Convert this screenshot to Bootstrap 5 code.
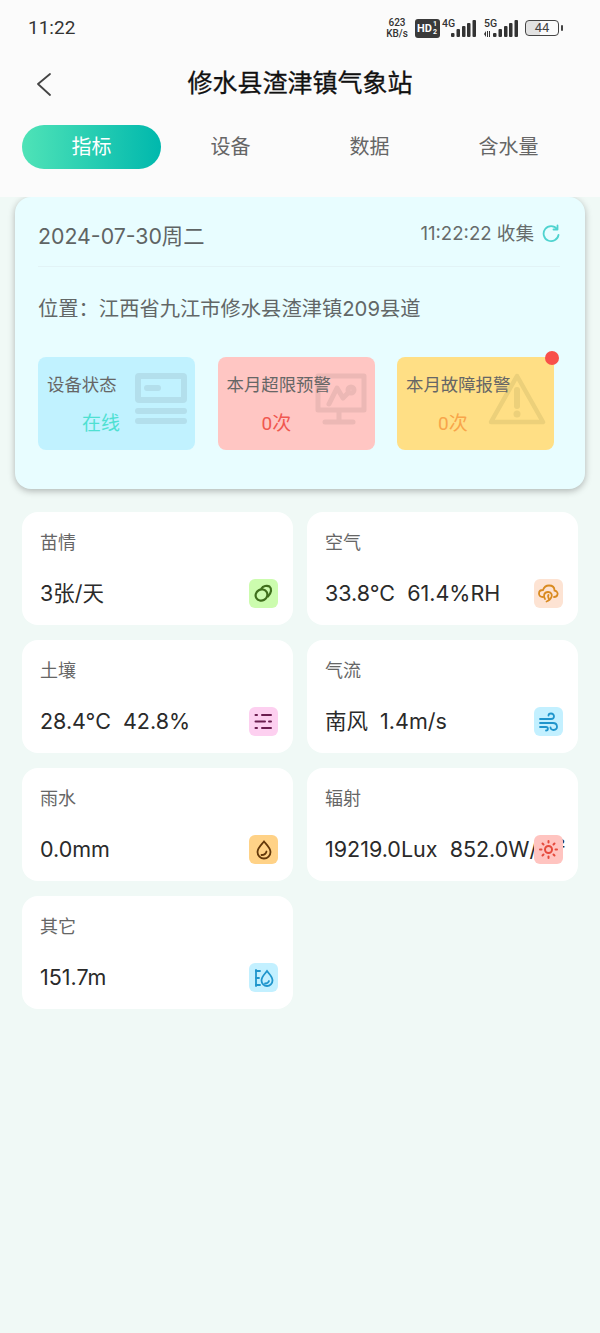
<!DOCTYPE html>
<html lang="zh-CN">
<head>
    <meta charset="UTF-8">
    <meta name="viewport" content="width=device-width, initial-scale=1.0">
    <title>修水县渣津镇气象站</title>
    <link href="https://cdn.jsdelivr.net/npm/bootstrap@5.3.0/dist/css/bootstrap.min.css" rel="stylesheet">
    <style>
        body {
            background: #f0f9f6;
            font-family: Roboto, "Noto Sans CJK SC", sans-serif;
            color: #222;
            min-height: 1333px;
        }
        /* top area */
        .top-head { background: #fbfbfb; height: 197px; position: relative; z-index: 2; }
        .status-row { height: 56px; padding: 0 37px 0 28px; }
        .clock { font-size: 19px; color: #333; }
        .speed { width: 26px; font-size: 10px; line-height: 11px; font-weight: 500; color: #333; text-align: center; white-space: nowrap; }
        .hd-tag {
            width: 25px; height: 19px; margin-left: 5px; background: #3a3a3a; color: #fff; border-radius: 3px;
            font-size: 11px; font-weight: 700; line-height: 11px; padding-left: 2px;
        }
        .hd-frac { font-size: 7px; line-height: 8px; text-align: center; margin-left: 1px; }
        .net-tag { width: 14px; height: 18px; font-size: 10.5px; font-weight: 500; color: #333; line-height: 10px; }
        .net-tag svg { display: block; margin-top: 2px; }
        .net-4g { margin-left: 2px; margin-right: -5px; }
        .net-5g { margin-left: 8px; margin-right: -5px; }
        .batt {
            width: 34px; height: 16px; margin-left: 7px; border: 1.5px solid #444; border-radius: 4px;
            font-size: 13px; line-height: 13px; text-align: center; color: #444;
            background: linear-gradient(90deg, #e2e2e2 44%, transparent 44%);
        }
        .batt-nub { width: 2px; height: 6px; background: #444; border-radius: 1px; margin-left: 2px; }
        .title-row { height: 56px; }
        .back-btn { position: absolute; left: 35px; top: 15px; }
        .page-title { font-size: 25px; font-weight: 400; color: #111; margin: 0; line-height: 56px; -webkit-text-stroke: .3px #111; }
        .tab-row { padding: 13px 22px 0; }
        .tab-item { width: 139px; height: 44px; line-height: 44px; font-size: 20px; color: #666; text-align: center; }
        .tab-item.is-on { color: #fff; border-radius: 22px; background: linear-gradient(90deg, #4fe3b7, #00b8ad); }
        /* summary card */
        .hero-card {
            margin: 0 15px; height: 292px; padding: 0 25px 0 23px; background: #e8fdff;
            border-radius: 16px;
            box-shadow: 0 2px 7px rgba(0, 0, 0, .28);
        }
        .hero-top { height: 70px; padding-top: 10px; border-bottom: 1px solid #e2f3f6; }
        .hero-date { font-size: 21.3px; color: #5f6464; font-family: Inter, "Noto Sans CJK SC", sans-serif; }
        .hero-time { font-size: 18.6px; color: #666b6b; font-family: Inter, "Noto Sans CJK SC", sans-serif; }
        .hero-clock { margin-top: -5px; }
        .hero-place { font-size: 20.3px; line-height: 28px; color: #626767; margin-top: 28px; font-family: Inter, "Noto Sans CJK SC", sans-serif; }
        .stat-row { margin-top: 34px; gap: 22.5px; }
        .stat-box { width: 157px; height: 93px; border-radius: 8px; padding: 16px 9px; position: relative; flex: none; }
        .stat-name { font-size: 17.4px; line-height: 24px; color: #666; white-space: nowrap; position: relative; }
        .stat-val { font-size: 19px; line-height: 26px; margin-top: 14px; margin-left: 35px; position: relative; }
        .stat-art { position: absolute; top: 16px; right: 8px; width: 52px; height: 52px; }
        .stat-art.is-wide { width: 58px; }
        .stat-blue { background: #c1f2ff; }
        .stat-blue .stat-val { color: #4fe0d2; }
        .stat-red { background: #ffc6c3; }
        .stat-red .stat-val { color: #f0574f; }
        .stat-yellow { background: #ffdf85; }
        .stat-yellow .stat-val { color: #f8a54a; margin-left: 32px; }
        .red-dot { position: absolute; top: -6px; right: -5px; width: 14px; height: 14px; border-radius: 50%; background: #f8504a; }
        /* metric tiles */
        .tile-wrap { padding: 23px 22px 0; }
        .tile-row { --bs-gutter-x: 14px; --bs-gutter-y: 15px; }
        .tile-box { height: 113px; background: #fff; border-radius: 16px; position: relative; padding: 19px 11px 0 18px; }
        .tile-name { font-size: 18px; line-height: 24px; color: #666; }
        .tile-val {
            font-family: Inter, "Noto Sans CJK SC", sans-serif; font-size: 21.5px; line-height: 30px;
            margin-top: 23px; color: #2a2a2a; white-space: pre; overflow: hidden;
        }
        .tile-ico {
            position: absolute; right: 15px; top: 67px; width: 29px; height: 29px; border-radius: 6px;
            display: flex; align-items: center; justify-content: center;
        }
    </style>
</head>
<body>
    <!-- Status bar, title and tabs -->
    <div class="top-head">
        <div class="status-row d-flex align-items-center justify-content-between">
            <span class="clock">11:22</span>
            <div class="d-flex align-items-center">
                <div class="speed">623<br>KB/s</div>
                <div class="hd-tag d-flex align-items-center">HD<div class="hd-frac">1<br>2</div></div>
                <div class="net-tag net-4g">4G</div>
                <svg width="25" height="18" viewBox="0 0 25 18" fill="#333"><rect x="0" y="14" width="3.5" height="4" rx="1"/><rect x="5.500" y="10" width="3.5" height="8" rx="1"/><rect x="11" y="7" width="3.5" height="11" rx="1"/><rect x="16" y="4" width="3.5" height="14" rx="1"/><rect x="21.500" y="1" width="3.5" height="17" rx="1"/></svg>
                <div class="net-tag net-5g">5G<svg width="8" height="6" viewBox="0 0 8 6" fill="#333"><path d="M0 3 L2 0 V6 Z"/><path d="M3 0 H4 V6 H3 Z"/><path d="M5 0 H6 V6 H5 Z"/></svg></div>
                <svg width="25" height="18" viewBox="0 0 25 18" fill="#333"><rect x="0" y="14" width="3.5" height="4" rx="1"/><rect x="5.500" y="10" width="3.5" height="8" rx="1"/><rect x="11" y="7" width="3.5" height="11" rx="1"/><rect x="16" y="4" width="3.5" height="14" rx="1"/><rect x="21.500" y="1" width="3.5" height="17" rx="1"/></svg>
                <div class="batt">44</div>
                <div class="batt-nub"></div>
            </div>
        </div>
        <div class="title-row text-center position-relative">
            <svg class="back-btn" width="16" height="26" viewBox="0 0 16 26" fill="none" stroke="#444" stroke-width="1.800" stroke-linecap="round" stroke-linejoin="round"><path d="M15 3 L3 13 L15 24"/></svg>
            <h1 class="page-title">修水县渣津镇气象站</h1>
        </div>
        <div class="tab-row d-flex">
            <div class="tab-item is-on">指标</div>
            <div class="tab-item">设备</div>
            <div class="tab-item">数据</div>
            <div class="tab-item">含水量</div>
        </div>
    </div>

    <!-- Summary card -->
    <div class="hero-card">
        <div class="hero-top d-flex align-items-center justify-content-between">
            <span class="hero-date">2024-07-30周二</span>
            <div class="hero-clock d-flex align-items-center gap-2">
                <span class="hero-time">11:22:22 收集</span>
                <svg width="18" height="20" viewBox="0 0 18 20" fill="none" stroke="#4fd3cf" stroke-width="1.8" stroke-linecap="round" stroke-linejoin="round"><path d="M15 5 A7.5 7.5 0 1 0 16.5 11"/><path d="M15.5 1.5 V5.5 H11.5"/></svg>
            </div>
        </div>
        <div class="hero-place">位置：江西省九江市修水县渣津镇209县道</div>
        <div class="stat-row d-flex">
            <div class="stat-box stat-blue">
                <svg class="stat-art" viewBox="0 0 52 52" fill="#b3dfec"><path fill-rule="evenodd" d="M4 0 H48 a4 4 0 0 1 4 4 V26 a4 4 0 0 1 -4 4 H4 a4 4 0 0 1 -4 -4 V4 a4 4 0 0 1 4 -4 Z M6 6 V24 H46 V6 Z"/><rect x="9" y="12" width="17" height="6" rx="3"/><rect x="0" y="35" width="52" height="6" rx="3"/><rect x="0" y="45" width="52" height="6" rx="3"/></svg>
                <div class="stat-name">设备状态</div>
                <div class="stat-val">在线</div>
            </div>
            <div class="stat-box stat-red">
                <svg class="stat-art" viewBox="0 0 52 52" fill="none" stroke="#ecb8b5" stroke-width="5" stroke-linecap="round" stroke-linejoin="round"><path d="M3 3 H49 V37 H3 Z"/><path d="M14 31 L22 15 L28 25 L33 20"/><circle cx="36" cy="17" r="3"/><path d="M24 38 V47"/><path d="M10 49 H38"/></svg>
                <div class="stat-name">本月超限预警</div>
                <div class="stat-val">0次</div>
            </div>
            <div class="stat-box stat-yellow">
                <div class="red-dot"></div>
                <svg class="stat-art is-wide" viewBox="0 0 58 52" fill="none" stroke="#ecd07a" stroke-width="4.500" stroke-linejoin="round"><path d="M29 3 L55 49 H3 Z"/><path d="M29 17 V33" stroke-width="6" stroke-linecap="round"/><circle cx="29" cy="41" r="3.500" fill="#ecd07a" stroke="none"/></svg>
                <div class="stat-name">本月故障报警</div>
                <div class="stat-val">0次</div>
            </div>
        </div>
    </div>

    <!-- Metric tiles -->
    <div class="tile-wrap">
        <div class="row row-cols-2 tile-row">
            <div class="col"><div class="tile-box">
                <div class="tile-name">苗情</div>
                <div class="tile-val">3张/天</div>
                <div class="tile-ico" style="background:#ccfcae"><svg width="19" height="19" viewBox="0 0 19 19" fill="none" stroke="#3f6f1c" stroke-width="2.200" stroke-linecap="round"><ellipse cx="7.500" cy="11" rx="6" ry="5.500" transform="rotate(-30 7.500 11)"/><path d="M7.500 4.500 C9 2 13 1 15.500 2.500 C18 4.500 17.500 9 14 12.500"/></svg></div>
            </div></div>
            <div class="col"><div class="tile-box">
                <div class="tile-name">空气</div>
                <div class="tile-val">33.8°C  61.4%RH</div>
                <div class="tile-ico" style="background:#fde3d3"><svg width="21" height="19" viewBox="0 0 21 19" fill="none" stroke="#d98a1f" stroke-width="1.800" stroke-linecap="round"><path d="M5 13 C2 13 1 11 1 9.500 C1 7 3 6 5 6 C6 3 8 1.500 11 1.500 C15 1.500 16.500 4 16.500 6.500 C19 7 20 9 19.500 10.500 C19 12.500 17.500 13 16 13"/><path d="M7 15 C5 12 6 8 10 8 C13 8 14.500 10.500 13.500 13 C12.500 15.500 10.500 17 8.500 17.500"/><path d="M11 15 C10 13 9.500 12 10.500 11"/></svg></div>
            </div></div>
            <div class="col"><div class="tile-box">
                <div class="tile-name">土壤</div>
                <div class="tile-val">28.4°C  42.8%</div>
                <div class="tile-ico" style="background:#fdd0f0"><svg width="19" height="17" viewBox="0 0 19 17" fill="none" stroke="#6b1d4f" stroke-width="2" stroke-linecap="round"><path d="M1.500 2 H3"/><path d="M8 2 H17"/><path d="M1.500 8.500 H11"/><path d="M15 8.500 H17"/><path d="M1.500 15 H3"/><path d="M8 15 H17"/></svg></div>
            </div></div>
            <div class="col"><div class="tile-box">
                <div class="tile-name">气流</div>
                <div class="tile-val">南风  1.4m/s</div>
                <div class="tile-ico" style="background:#c3f0ff"><svg width="20" height="20" viewBox="0 0 20 20" fill="none" stroke="#1f95cc" stroke-width="1.800" stroke-linecap="round"><path d="M1 7 H12 C16 7 16 1.500 12 1.500 C10.500 1.500 9.500 2.500 9.500 3.500"/><path d="M1 11 H14 C19 11 19.500 18 14.500 18 C12.500 18 11.500 16.500 11.500 15.500"/><path d="M1 15 H7 C9.500 15 9.500 18.500 7 18.500"/></svg></div>
            </div></div>
            <div class="col"><div class="tile-box">
                <div class="tile-name">雨水</div>
                <div class="tile-val">0.0mm</div>
                <div class="tile-ico" style="background:#ffd287"><svg width="16" height="20" viewBox="0 0 16 20" fill="none" stroke="#63380a" stroke-width="1.800" stroke-linecap="round"><path d="M8 1.500 C11 5 14.500 8 14.500 12 A6.500 6.500 0 0 1 1.500 12 C1.500 8 5 5 8 1.500 Z"/><path d="M5.500 15 C8 15 10 13.500 10.500 11.500"/></svg></div>
            </div></div>
            <div class="col"><div class="tile-box">
                <div class="tile-name">辐射</div>
                <div class="tile-val">19219.0Lux  852.0W/m²</div>
                <div class="tile-ico" style="background:#ffc4c0"><svg width="19" height="19" viewBox="0 0 19 19" fill="none" stroke="#e54a3c" stroke-width="2" stroke-linecap="round"><circle cx="9.500" cy="9.500" r="3.500"/><path d="M9.500 1 V2.500"/><path d="M9.500 16.500 V18"/><path d="M1 9.500 H2.500"/><path d="M16.500 9.500 H18"/><path d="M3.500 3.500 L4.500 4.500"/><path d="M14.500 14.500 L15.500 15.500"/><path d="M3.500 15.500 L4.500 14.500"/><path d="M14.500 4.500 L15.500 3.500"/></svg></div>
            </div></div>
            <div class="col"><div class="tile-box">
                <div class="tile-name">其它</div>
                <div class="tile-val">151.7m</div>
                <div class="tile-ico" style="background:#c3f0ff"><svg width="20" height="20" viewBox="0 0 20 20" fill="none" stroke="#1f95cc" stroke-width="1.800" stroke-linecap="round"><path d="M2 2 V18"/><path d="M2 3 H6"/><path d="M2 10 H5"/><path d="M2 17 H6"/><path d="M13 3 C15 6 18.500 8.500 18.500 12.500 A5.500 5.500 0 0 1 7.500 12.500 C7.500 8.500 11 6 13 3 Z"/><path d="M11 15.500 C13 15.500 14.500 14.500 15 13"/></svg></div>
            </div></div>
        </div>
    </div>
    <script src="https://cdn.jsdelivr.net/npm/bootstrap@5.3.0/dist/js/bootstrap.bundle.min.js"></script>
</body>
</html>
